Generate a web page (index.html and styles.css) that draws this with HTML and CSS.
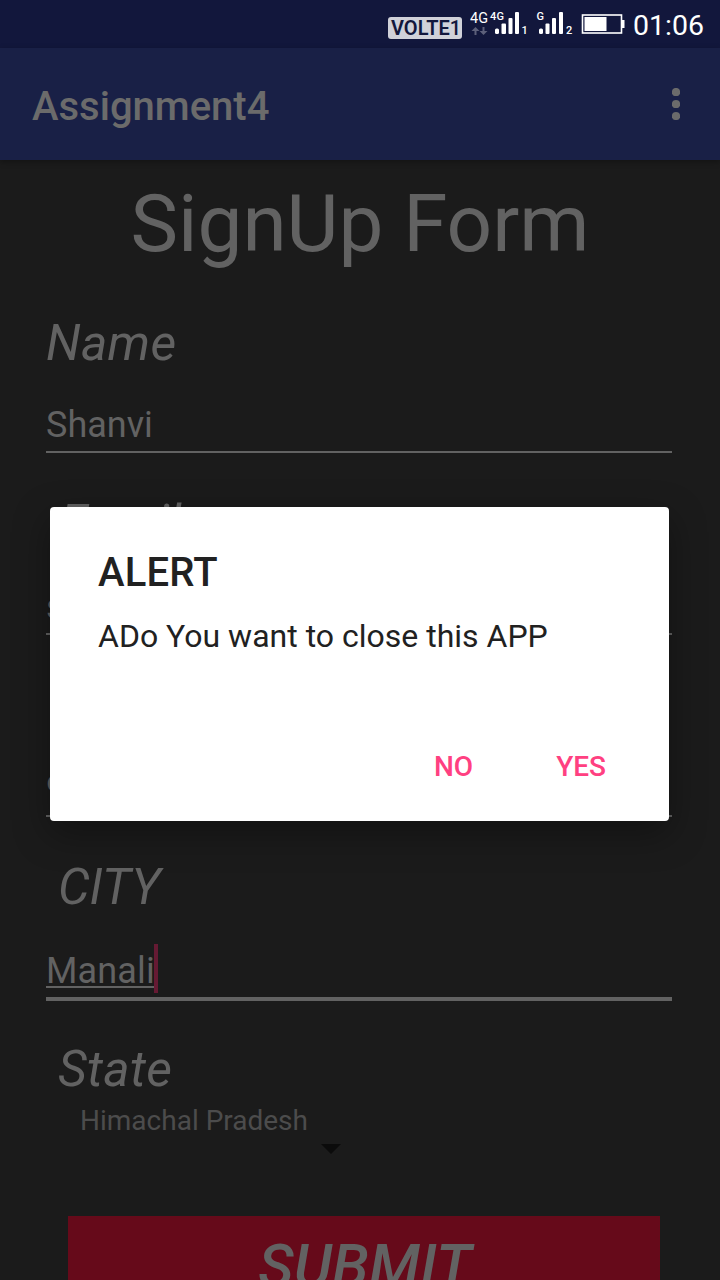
FILE: index.html
```html
<!DOCTYPE html>
<html lang="en">
<head>
<meta charset="utf-8">
<title>Assignment4</title>
<link rel="stylesheet" href="styles.css">
</head>
<body>
<div class="screen">
  <header class="status">
    <span class="volte">VOLTE<span class="one">1</span></span>
    <svg class="signals" width="104" height="48" viewBox="0 0 104 48" fill="#fff">
      <text x="0" y="23" font-size="14.5" textLength="18" lengthAdjust="spacingAndGlyphs">4G</text>
      <text x="20" y="20" font-size="11" font-weight="500" textLength="14">4G</text>
      <path fill="#5d607a" d="M5.5 27l4 4h-3v4h-2v-4h-3zM13.500 35l-4-4h3v-4h2v4h3z"/>
      <rect x="25" y="28.500" width="4" height="5.500" rx="1.500"/>
      <rect x="31.500" y="23.500" width="4.500" height="10.500" rx="1"/>
      <rect x="38.500" y="18" width="4" height="16" rx="1"/>
      <rect x="45" y="12" width="4" height="22" rx="1"/>
      <text x="51.500" y="34" font-size="11" font-weight="500">1</text>
      <text x="66.500" y="20" font-size="11" font-weight="500">G</text>
      <rect x="69" y="28.500" width="4" height="5.500" rx="1.500"/>
      <rect x="75.500" y="23.500" width="4" height="10.500" rx="1"/>
      <rect x="82" y="18" width="4" height="16" rx="1"/>
      <rect x="89" y="12" width="4" height="22" rx="1"/>
      <text x="96" y="34" font-size="11" font-weight="500">2</text>
    </svg>
    <svg class="battery" width="44" height="48" viewBox="0 0 44 48">
      <rect x="1.500" y="15" width="39" height="18" fill="none" stroke="#fff" stroke-width="1.600"/>
      <rect x="3.500" y="17" width="22" height="14" fill="#fff"/>
      <rect x="41" y="20" width="2.500" height="8" fill="#fff"/>
    </svg>
    <span class="clock">01:06</span>
  </header>
  <div class="appbar">
    <h1 class="app-title">Assignment4</h1>
    <svg width="8" height="32" viewBox="0 0 8 32" fill="#6b6b6b"><circle cx="4" cy="4" r="4.100"/><circle cx="4" cy="16" r="4.100"/><circle cx="4" cy="28" r="4.100"/></svg>
  </div>
  <main class="form">
    <h2 class="form-title">SignUp Form</h2>
    <label class="label label-name">Name</label>
    <div class="field">Shanvi</div>
    <label class="label label-email">Email</label>
    <div class="field">s</div>
    <div class="field field-phone">9</div>
    <label class="label label-city">CITY</label>
    <div class="field field-active"><span class="composing">Manali</span><span class="caret"></span></div>
    <label class="label label-state">State</label>
    <div class="spinner">Himachal Pradesh</div>
    <svg class="arrow" width="20" height="10" viewBox="0 0 20 10"><path d="M0 0h20L10 10z" fill="#0b0b0b"/></svg>
    <div class="submit">SUBMIT</div>
  </main>
  <section class="dialog">
    <h3 class="dialog-title">ALERT</h3>
    <p class="message">ADo You want to close this APP</p>
    <div class="actions"><span>NO</span><span>YES</span></div>
  </section>
</div>
</body>
</html>
```
FILE: styles.css
```css
* { box-sizing: border-box; }
body { margin: 0; background: #1b1b1b; font-family: Roboto, sans-serif; }
h1, h2, h3, p { margin: 0; font-weight: 400; }
.screen { position: relative; width: 720px; height: 1280px; overflow: hidden; display: flex; flex-direction: column; color: #626262; }
.status { height: 48px; flex: none; display: flex; background: #12173c; color: #fff; padding-left: 388px; }
.volte { width: 74px; height: 22px; margin-top: 17px; padding-left: 3px; border-radius: 3px; background: #d0d1d9; color: #12173c; font-size: 20px; line-height: 23px; font-weight: 600; white-space: nowrap; overflow: hidden; }
.one { font-weight: 500; }
.signals { margin-left: 8px; flex: none; }
.battery { margin-left: 7px; flex: none; }
.clock { margin-left: 8px; font-size: 28.5px; line-height: 51px; white-space: nowrap; }
.appbar { height: 112px; flex: none; display: flex; justify-content: space-between; align-items: center; padding: 0 40px 0 32px; background: #192046; color: #6b6b6b; box-shadow: 0 2px 6px rgba(0, 0, 0, .3); z-index: 1; }
.app-title { font-size: 40px; font-weight: 500; line-height: 48px; padding-top: 6px; }
.form { flex: none; height: 1120px; padding: 17px 48px 0 46px; display: flex; flex-direction: column; }
.form > * { flex: none; }
.form-title { font-size: 80px; line-height: 94px; text-align: center; padding-left: 2px; }
.label { font-size: 50px; line-height: 58px; font-style: italic; letter-spacing: .3px; }
.label-name { margin-top: 43px; }
.field { height: 49px; margin-top: 32px; font-size: 36px; line-height: 42px; border-bottom: 2px solid #626262; }
.label-email { margin: 41px 0 0 14px; }
.label-email + .field { margin-top: 34px; }
.field-phone { margin-top: 133px; }
.label-city { margin: 41px 0 0 12px; letter-spacing: 0; }
.field-active { margin-top: 34px; height: 51px; border-bottom-width: 4px; display: flex; }
.composing { height: 38px; border-bottom: 2px solid #626262; letter-spacing: .15px; }
.caret { width: 4px; height: 49px; margin-top: -6px; margin-left: -1px; background: #661a33; }
.label-state { margin: 39px 0 0 12px; }
.spinner { margin: 7px 0 0 34px; font-size: 28px; line-height: 32px; color: #4c4c4c; }
.arrow { margin: 7px 0 0 275px; }
.submit { height: 100px; margin: 62px 12px 0 22px; background: #660a1a; font-size: 60px; line-height: 102px; font-style: italic; font-weight: 500; text-align: center; letter-spacing: .2px; padding-left: 2px; }
.dialog { position: absolute; left: 50px; top: 507px; width: 619px; height: 314px; padding: 42px 40px 0 48px; border-radius: 4px; background: #fff; color: #212121; box-shadow: 0 12px 36px rgba(0, 0, 0, .35); z-index: 2; }
.dialog-title { font-size: 40px; font-weight: 500; line-height: 48px; letter-spacing: .2px; }
.message { margin-top: 20px; font-size: 32px; line-height: 38px; }
.actions { margin-top: 95px; display: flex; justify-content: flex-end; gap: 83px; padding-right: 23px; font-size: 28px; line-height: 34px; font-weight: 500; color: #ff4081; }
```
